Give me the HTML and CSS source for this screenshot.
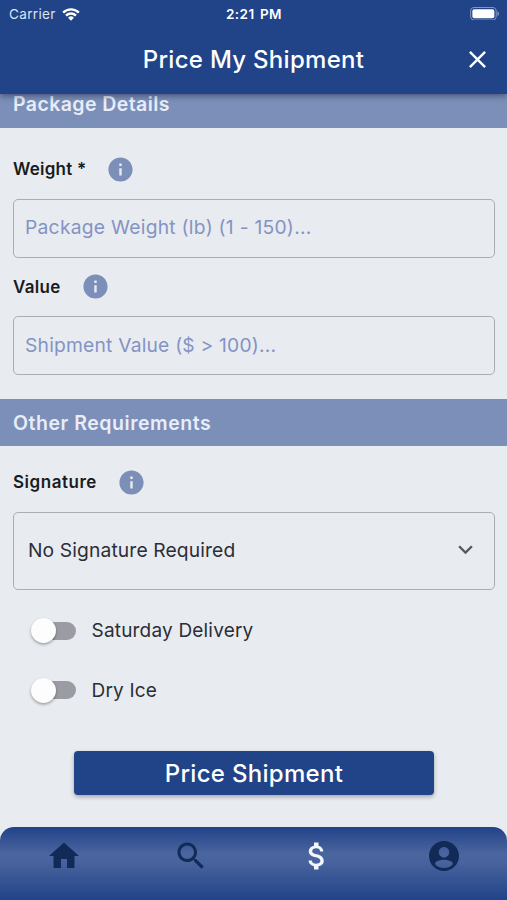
FILE: index.html
```html
<!DOCTYPE html>
<html lang="en">
<head>
<meta charset="utf-8">
<title>Price My Shipment</title>
<link rel="stylesheet" href="styles.css">
</head>
<body>
<svg class="defs" aria-hidden="true">
  <symbol id="info" viewBox="0 0 24 24"><path d="M12 2C6.48 2 2 6.48 2 12s4.48 10 10 10 10-4.48 10-10S17.52 2 12 2zm1 15h-2v-6h2v6zm0-8h-2V7h2v2z"/></symbol>
</svg>
<div class="app">
  <header class="header">
    <div class="status">
      <span class="carrier"><span class="carrier-name">Carrier</span>
        <svg class="wifi" viewBox="0 0 18 14"><path d="M0.3 4.7a12.4 12.4 0 0 1 17.4 0L16 6.5a9.9 9.9 0 0 0-14 0z"/><path d="M3.2 7.7a8.3 8.3 0 0 1 11.6 0l-1.7 1.8a5.8 5.8 0 0 0-8.2 0z"/><path d="M6.1 10.7a4.2 4.2 0 0 1 5.8 0L9 13.7z"/></svg>
      </span>
      <span class="clock">2:21 PM</span>
      <svg class="battery" viewBox="0 0 31 14"><rect x=".6" y=".6" width="26.5" height="12.8" rx="3.8" class="battery-case"/><rect x="2.4" y="2.4" width="22.8" height="9.2" rx="2"/><path class="battery-tip" d="M28.4 4.5c2.2.8 2.2 4.2 0 5z"/></svg>
    </div>
    <div class="titlebar">
      <h1 class="title">Price My Shipment</h1>
      <svg class="icon close" viewBox="0 0 24 24"><path d="M19 6.41 17.59 5 12 10.59 6.41 5 5 6.41 10.59 12 5 17.59 6.41 19 12 13.41 17.59 19 19 17.59 13.41 12z"/></svg>
    </div>
  </header>
  <main class="form">
    <h2 class="band band-top">Package Details</h2>
    <div class="label-row weight-row"><label>Weight *</label><svg class="icon info"><use href="#info"/></svg></div>
    <div class="field"><span class="t-pweight">Package Weight (lb) (1 - 150)...</span></div>
    <div class="label-row value-row"><label>Value</label><svg class="icon info"><use href="#info"/></svg></div>
    <div class="field"><span class="t-svalue">Shipment Value ($ &gt; 100)...</span></div>
    <h2 class="band band-other">Other Requirements</h2>
    <div class="label-row sign-row"><label>Signature</label><svg class="icon info"><use href="#info"/></svg></div>
    <div class="field select"><span>No Signature Required</span><svg class="icon chevron" viewBox="0 0 24 24"><path d="M16.59 8.59 12 13.17 7.41 8.59 6 10l6 6 6-6z"/></svg></div>
    <div class="toggle-row"><span class="switch"><span class="knob"></span></span><span>Saturday Delivery</span></div>
    <div class="toggle-row"><span class="switch"><span class="knob"></span></span><span>Dry Ice</span></div>
    <button class="submit">Price Shipment</button>
  </main>
  <nav class="nav">
    <svg class="tab" viewBox="0 0 24 24"><path d="M10 20v-6h4v6h5v-8h3L12 3 2 12h3v8z"/></svg>
    <svg class="tab" viewBox="0 0 24 24"><path d="M15.5 14h-.79l-.28-.27C15.41 12.59 16 11.11 16 9.5 16 5.91 13.09 3 9.5 3S3 5.91 3 9.5 5.91 16 9.5 16c1.61 0 3.09-.59 4.23-1.57l.27.28v.79l5 4.99L20.49 19l-4.99-5zm-6 0C7.01 14 5 11.99 5 9.5S7.01 5 9.5 5 14 7.01 14 9.5 11.99 14 9.5 14z"/></svg>
    <svg class="tab active" viewBox="0 0 24 24"><path d="M11.8 10.9c-2.27-.59-3-1.2-3-2.15 0-1.09 1.01-1.85 2.7-1.85 1.78 0 2.44.85 2.5 2.1h2.21c-.07-1.72-1.12-3.3-3.21-3.81V3h-3v2.16c-1.94.42-3.5 1.68-3.5 3.61 0 2.31 1.91 3.46 4.7 4.13 2.5.6 3 1.48 3 2.41 0 .69-.49 1.79-2.7 1.79-2.06 0-2.87-.92-2.98-2.1h-2.2c.12 2.19 1.76 3.42 3.68 3.83V21h3v-2.15c1.95-.37 3.5-1.5 3.5-3.55 0-2.84-2.43-3.81-4.7-4.4z"/></svg>
    <svg class="tab" viewBox="0 0 24 24"><path d="M12 2C6.48 2 2 6.48 2 12s4.48 10 10 10 10-4.48 10-10S17.52 2 12 2zm0 4c1.93 0 3.5 1.57 3.5 3.5S13.93 13 12 13s-3.5-1.57-3.5-3.5S10.070 6 12 6zm0 14c-2.500 0-4.710-1.050-6-2.700.03-1.990 4-2.800 6-2.800 1.990 0 5.970.81 6 2.800-1.290 1.650-3.500 2.700-6 2.700z"/></svg>
  </nav>
</div>
</body>
</html>
```
FILE: styles.css
```css
* { box-sizing: border-box; }
body { margin: 0; font-family: Inter, "Liberation Sans", sans-serif; background: #e8ecf1; color: #191b20; }
h1, h2 { margin: 0; }
.defs { position: absolute; width: 0; height: 0; }
.app { width: 507px; height: 900px; display: flex; flex-direction: column; overflow: hidden; }
.header { height: 94px; flex: none; background: #214388; color: #fff; z-index: 1; box-shadow: 0 2px 6px rgba(30, 35, 60, .55); }
.status { height: 27px; display: grid; grid-template-columns: 1fr auto 1fr; align-items: center; padding: 0 7px 0 9px; }
.carrier { display: flex; align-items: center; gap: 6px; font-size: 13.5px; color: #dce3f1; }
.carrier-name { letter-spacing: .35px; }
.wifi { width: 18px; height: 14px; fill: #fff; }
.clock { font-size: 13.5px; font-weight: 600; letter-spacing: .45px; word-spacing: 1.5px; margin-right: 1px; }
.battery { width: 30px; height: 13.5px; fill: #fff; justify-self: end; }
.battery-case { fill: none; stroke: #8295bf; stroke-width: 1.1; }
.battery-tip { fill: #8295bf; }
.titlebar { height: 65px; display: grid; grid-template-columns: 1fr auto 1fr; align-items: center; padding-right: 15px; }
.title { grid-column: 2; font-size: 24px; font-weight: 500; letter-spacing: .3px; margin-left: 15px; }
.icon { width: 29px; height: 29px; flex: none; }
.close { fill: #fff; justify-self: end; }
.form { flex: 1; display: flex; flex-direction: column; }
.band { height: 47px; flex: none; display: flex; align-items: center; padding-left: 13px; background: #7b8fb9; color: #e8edf8; font-size: 19.5px; font-weight: 600; letter-spacing: .42px; }
.band-top { height: 34px; padding-bottom: 14px; }
.band-other { margin-top: 24px; letter-spacing: .54px; }
.label-row { height: 30px; display: flex; align-items: center; gap: 20px; padding-left: 13px; font-size: 17px; font-weight: 600; }
.info { fill: #7b8fb9; }
.weight-row { margin-top: 26.4px; gap: 19px; letter-spacing: .25px; }
.value-row { margin-top: 14px; letter-spacing: .3px; }
.sign-row { margin-top: 21px; letter-spacing: .53px; }
.field { height: 59px; flex: none; margin: 14.4px 12px 0 13px; padding: 0 14px 2px 11px; display: flex; align-items: center; border: 1.5px solid #a9adb6; border-radius: 5px; color: #8493c3; font-size: 19.25px; }
.t-pweight { letter-spacing: .26px; }
.t-svalue { letter-spacing: .2px; }
.select { height: 78px; margin-bottom: 11.5px; justify-content: space-between; padding-left: 14px; color: #2b2e36; letter-spacing: .12px; }
.chevron { fill: #55585f; }
.toggle-row { height: 59.5px; flex: none; display: flex; align-items: center; gap: 15.5px; padding-left: 36px; font-size: 19px; letter-spacing: .19px; color: #2b2e36; }
.switch { width: 40px; height: 18px; border-radius: 9px; background: #9b9ca3; display: flex; align-items: center; }
.knob { width: 25px; height: 25px; flex: none; margin-left: -5px; border-radius: 50%; background: #fdfdfd; box-shadow: 0 1.5px 3px rgba(0, 0, 0, .35); }
.submit { width: 360px; height: 44px; margin: 31px 0 0 74px; padding: 0; border: 0; border-radius: 4px; background: #214388; color: #fff; font: 500 24px Inter, sans-serif; letter-spacing: .3px; box-shadow: 0 2px 4px rgba(0, 0, 0, .3); }
.nav { height: 73px; flex: none; display: grid; grid-template-columns: repeat(4, 1fr); justify-items: center; padding: 11px 0 0 1px; border-radius: 14px 14px 0 0; background: linear-gradient(#214388, #4b659f 37%, #47629d 50%, #214388); }
.tab { width: 36px; height: 36px; fill: #122a57; }
.active { fill: #f3f6fc; }
```
